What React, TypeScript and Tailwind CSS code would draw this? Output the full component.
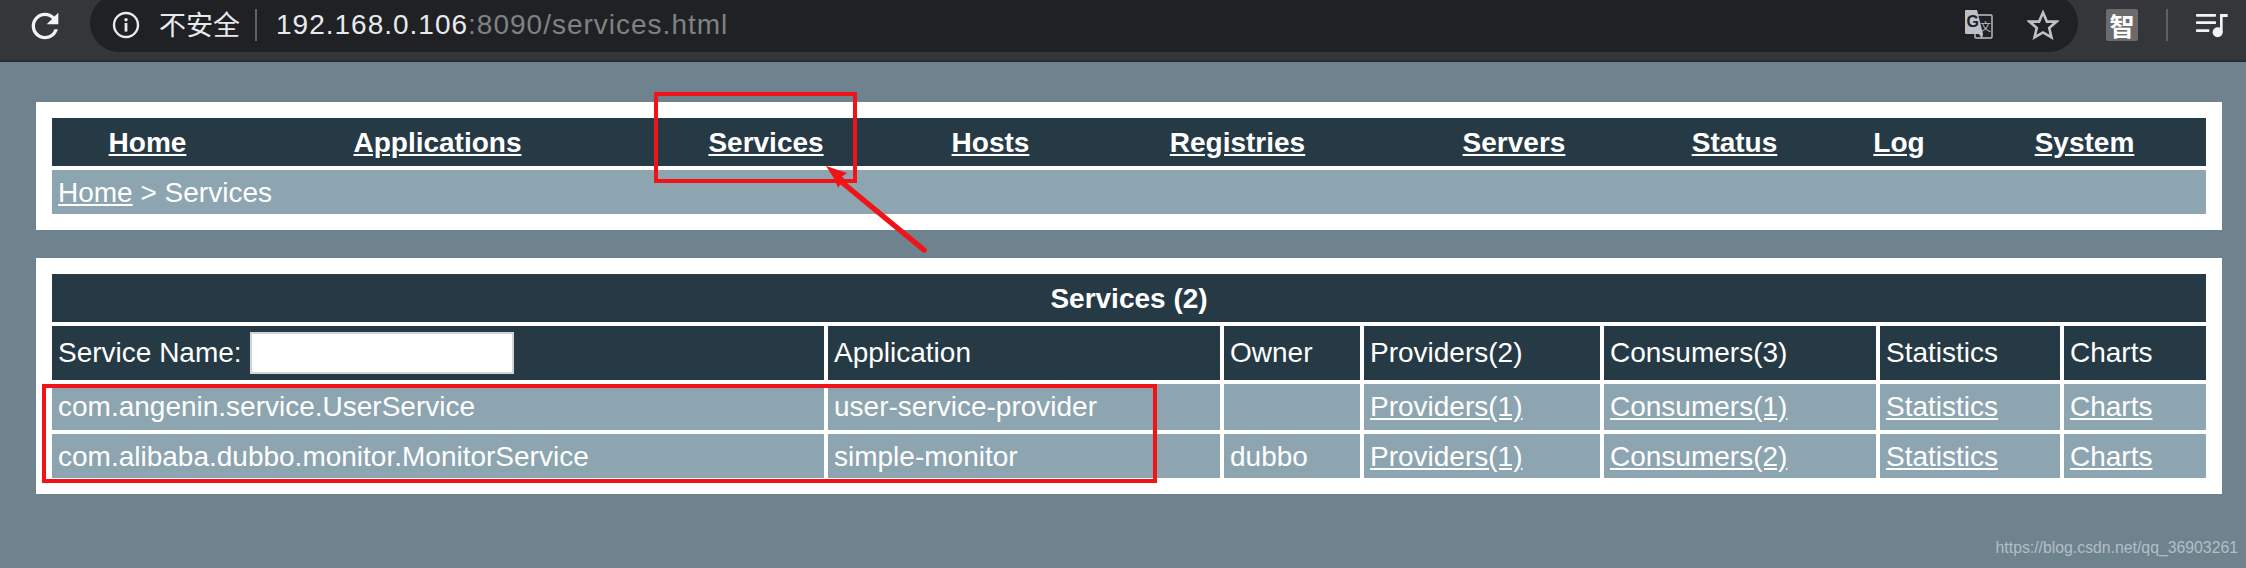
const navItems = [
  'Home',
  'Applications',
  'Services',
  'Hosts',
  'Registries',
  'Servers',
  'Status',
  'Log',
  'System',
];

const headers = ['Application', 'Owner', 'Providers(2)', 'Consumers(3)', 'Statistics', 'Charts'];

const rows = [
  {
    service: 'com.angenin.service.UserService',
    app: 'user-service-provider',
    owner: '',
    providers: 'Providers(1)',
    consumers: 'Consumers(1)',
    height: 'h-[46px]',
  },
  {
    service: 'com.alibaba.dubbo.monitor.MonitorService',
    app: 'simple-monitor',
    owner: 'dubbo',
    providers: 'Providers(1)',
    consumers: 'Consumers(2)',
    height: 'h-[44px] pt-px',
  },
];

const ReloadIcon = () => (
  <svg width="40" height="40" viewBox="0 0 24 24" fill="#f1f3f4">
    <path d="M17.65 6.35A7.958 7.958 0 0 0 12 4c-4.42 0-7.99 3.58-7.99 8s3.57 8 7.99 8c3.73 0 6.84-2.55 7.73-6h-2.08A5.99 5.99 0 0 1 12 18c-3.31 0-6-2.69-6-6s2.69-6 6-6c1.66 0 3.14.69 4.22 1.78L13 11h7V4l-2.35 2.35z" />
  </svg>
);

const InfoIcon = () => (
  <svg width="28" height="28" viewBox="0 0 28 28" fill="none">
    <circle cx="14" cy="14" r="12" stroke="#e8eaed" strokeWidth="2.4" />
    <circle cx="14" cy="8.8" r="1.7" fill="#e8eaed" />
    <rect x="12.6" y="12" width="2.8" height="8.6" fill="#e8eaed" />
  </svg>
);

const TranslateIcon = () => (
  <svg width="28" height="30" viewBox="0 0 28 30" className="font-['Liberation_Sans',sans-serif]">
    <rect x="10" y="5" width="17" height="23" rx="1" fill="#202124" stroke="#bdc1c6" strokeWidth="1.4" />
    <path d="M1 0h11l6 24H1a1 1 0 0 1-1-1V1a1 1 0 0 1 1-1z" fill="#bdc1c6" />
    <path d="M14 24l3 5 1-5z" fill="#bdc1c6" />
    <text x="1.5" y="17" fontSize="16" fontWeight="700" fill="#202124">
      G
    </text>
    <text x="15" y="21" fontSize="11" fill="#bdc1c6" className="font-['Noto_Sans_CJK_SC',sans-serif]">
      文
    </text>
  </svg>
);

const StarIcon = () => (
  <svg width="32" height="30" viewBox="0 0 32 30" fill="none">
    <path
      d="M16 2.6l3.9 9h9.7l-7.4 6.3 2.3 9.5L16 22.4l-8.5 5 2.3-9.5-7.4-6.3h9.7z"
      stroke="#bdc1c6"
      strokeWidth="2.6"
      strokeLinejoin="miter"
    />
  </svg>
);

const PlaylistIcon = () => (
  <svg width="33" height="26" viewBox="0 0 99 78" fill="#f1f3f4">
    <rect x="0" y="6" width="60" height="8" rx="2" />
    <rect x="0" y="28" width="60" height="8" rx="2" />
    <rect x="0" y="52" width="40" height="8" rx="2" />
    <circle cx="65" cy="61" r="15" />
    <rect x="72" y="6" width="8" height="55" />
    <path d="M72 6h23v9H72z" />
  </svg>
);

const Cell = ({ className = '', children }: { className?: string; children?: React.ReactNode }) => (
  <div className={`flex items-center px-[6px] text-[28px] text-white ${className}`}>{children}</div>
);

const App = () => {
  return (
    <div className="relative h-[568px] w-full overflow-hidden bg-[#6e838e] font-['Liberation_Sans','Noto_Sans_CJK_SC',sans-serif]">
      <header className="flex h-[62px] overflow-hidden border-b-2 border-[#2a2b2e] bg-[#35363a]">
        <div className="flex w-[90px] items-center justify-center pb-[9px] pr-[1px]">
          <ReloadIcon />
        </div>
        <div className="-mt-[6px] flex h-[58px] w-[1988px] items-center rounded-[29px] bg-[#202124] pl-[22px] pr-[19px] pt-[4px]">
          <InfoIcon />
          <span className="mb-[3px] ml-[19px] font-['Noto_Sans_CJK_SC',sans-serif] text-[27px] leading-none text-[#e8eaed]">
            不安全
          </span>
          <div className="ml-[15px] h-[32px] w-[2px] bg-[#5f6368]" />
          <div className="ml-[19px] flex-1 text-[28px] leading-none tracking-[1px] text-[#e8eaed]">
            192.168.0.106<span className="text-[#7f8185]">:8090/services.html</span>
          </div>
          <TranslateIcon />
          <div className="ml-[34px]">
            <StarIcon />
          </div>
        </div>
        <div className="flex flex-1 items-center pb-[10px] pl-[28px]">
          <div className="flex h-[32px] w-[32px] items-center justify-center rounded-[2px] bg-[#6b6b6b] font-['Noto_Sans_CJK_SC',sans-serif] text-[25px] leading-none font-bold text-white">
            智
          </div>
          <div className="ml-[28px] h-[32px] w-[2px] bg-[#5f6063]" />
          <div className="ml-[28px]">
            <PlaylistIcon />
          </div>
        </div>
      </header>

      <div className="ml-9 mr-6 mt-10 bg-white p-4">
        <nav className="grid h-12 grid-cols-[191px_389px_268px_181px_313px_240px_201px_128px_243px] bg-[#263a46] pt-px">
          {navItems.map((item) => (
            <div key={item} className="flex items-center justify-center">
              <a href="#" className="text-[28px] font-bold text-white underline">
                {item}
              </a>
            </div>
          ))}
        </nav>
        <div className="mt-1 flex h-11 items-center bg-[#8da5b1] px-[6px] pt-px text-[28px] text-white">
          <a href="#" className="underline">
            Home
          </a>
          <span className="whitespace-pre"> &gt; Services</span>
        </div>
      </div>

      <div className="ml-9 mr-6 mt-7 bg-white p-4">
        <div className="grid grid-cols-[772px_392px_136px_236px_272px_180px_142px] gap-1">
          <div className="col-span-7 flex h-12 items-center justify-center bg-[#263a46] pt-px text-[28px] font-bold text-white">
            Services (2)
          </div>

          <Cell className="h-[54px] bg-[#263a46]">
            <label htmlFor="service-filter">Service Name:</label>
            <input
              id="service-filter"
              type="text"
              className="ml-[8px] h-[42px] w-[264px] border-2 border-[#d4d4d4] bg-white"
            />
          </Cell>
          {headers.map((title) => (
            <Cell key={title} className="h-[54px] bg-[#263a46]">
              {title}
            </Cell>
          ))}

          {rows.map((row) => (
            <div key={row.service} className="contents">
              <Cell className={`${row.height} bg-[#8da5b1]`}>{row.service}</Cell>
              <Cell className={`${row.height} bg-[#8da5b1]`}>{row.app}</Cell>
              <Cell className={`${row.height} bg-[#8da5b1]`}>{row.owner}</Cell>
              <Cell className={`${row.height} bg-[#8da5b1]`}>
                <a href="#" className="underline">
                  {row.providers}
                </a>
              </Cell>
              <Cell className={`${row.height} bg-[#8da5b1]`}>
                <a href="#" className="underline">
                  {row.consumers}
                </a>
              </Cell>
              <Cell className={`${row.height} bg-[#8da5b1]`}>
                <a href="#" className="underline">
                  Statistics
                </a>
              </Cell>
              <Cell className={`${row.height} bg-[#8da5b1]`}>
                <a href="#" className="underline">
                  Charts
                </a>
              </Cell>
            </div>
          ))}
        </div>
      </div>

      {/* red annotations drawn over the page */}
      <div className="absolute left-[654px] top-[92px] h-[91px] w-[203px] border-4 border-[#f01418]" />
      <div className="absolute left-[42px] top-[384px] h-[99px] w-[1115px] border-4 border-[#f01418]" />
      <svg className="absolute left-[810px] top-[155px]" width="125" height="105" viewBox="0 0 125 105" fill="#f01418">
        <path d="M16 11l21 7-5 3.5 3 3-7 8-4-9z" />
        <path d="M28 24l86 71" stroke="#f01418" strokeWidth="5.5" strokeLinecap="round" fill="none" />
      </svg>

      <div className="absolute bottom-[10px] right-[8px] text-[15.8px] leading-5 text-[#b3bfc5]">
        https://blog.csdn.net/qq_36903261
      </div>
    </div>
  );
};

export default App;
